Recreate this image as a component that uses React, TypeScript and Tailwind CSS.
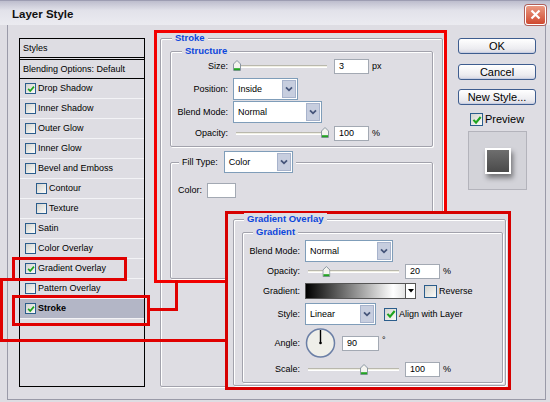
import React from 'react';

function Check({ on, big }: { on?: boolean; big?: boolean }) {
  return (
    <span
      className={
        (big ? 'w-[13px] h-[13px]' : 'w-[11px] h-[11px]') +
        ' shrink-0 flex items-center justify-center border border-[#2b5d8c] bg-[linear-gradient(135deg,#d3d3cf,#fbfbf8)]'
      }
    >
      {on && (
        <svg viewBox="0 0 9 9" className={big ? 'w-[10px] h-[10px]' : 'w-[8px] h-[8px]'}>
          <path d="M1.3 4.4 L3.6 6.8 L7.8 1.8" fill="none" stroke="#1ea41e" strokeWidth="1.9" />
        </svg>
      )}
    </span>
  );
}

function Thumb() {
  return (
    <svg width="8" height="11" viewBox="0 0 8 11">
      <path d="M0.5 4 L4 0.5 L7.5 4 V10.5 H0.5 Z" fill="#f4f4ef" stroke="#8a96a2" />
      <rect x="1" y="8.2" width="6" height="2" fill="#22a322" />
    </svg>
  );
}

function Slider({ className, trackClass, value }: { className: string; trackClass: string; value: number }) {
  // value 0..1 places the thumb along the track
  return (
    <div className={'relative h-[12px] flex items-center ' + className}>
      <div className={'ml-[3px] h-[3px] bg-[#f1f0e4] border-t border-[#b9b8ad] border-b border-b-[#ffffff] ' + trackClass} />
      <div className="absolute top-0" style={{ left: `${value * 100}%`, transform: `translateX(-${value * 100}%)` }}>
        <Thumb />
      </div>
    </div>
  );
}

function Select({ text, className }: { text: string; className: string }) {
  return (
    <div className={'flex h-[22px] border border-[#7f9db9] bg-white shrink-0 ' + className}>
      <span className="flex-1 flex items-center pl-[4px] pt-[1px]">{text}</span>
      <span className="w-[14px] my-[1px] mr-[1px] flex items-center justify-center bg-[#c7cedf] border border-[#a7b3cc]">
        <svg width="8" height="6" viewBox="0 0 8 6">
          <path d="M1 1.3 L4 4.3 L7 1.3" fill="none" stroke="#45557a" strokeWidth="1.8" />
        </svg>
      </span>
    </div>
  );
}

function Field({ value, className }: { value: string; className: string }) {
  return (
    <div className={'h-[15px] bg-white border border-[#a3a9b3] flex items-center pl-[4px] shrink-0 ' + className}>
      {value}
    </div>
  );
}

type Item = { label: string; on?: boolean; indent?: boolean; selected?: boolean };

const items: Item[] = [
  { label: 'Drop Shadow', on: true },
  { label: 'Inner Shadow' },
  { label: 'Outer Glow' },
  { label: 'Inner Glow' },
  { label: 'Bevel and Emboss' },
  { label: 'Contour', indent: true },
  { label: 'Texture', indent: true },
  { label: 'Satin' },
  { label: 'Color Overlay' },
  { label: 'Gradient Overlay', on: true },
  { label: 'Pattern Overlay' },
  { label: 'Stroke', on: true, selected: true },
];

function StyleList() {
  return (
    <div className="w-[126px] h-[349px] border border-black flex flex-col shrink-0">
      <div className="h-[19px] flex items-center pl-[3px] border-b border-black">Styles</div>
      <div className="h-[1px]" />
      <div className="h-[20px] flex items-center pl-[3px] border-t border-b border-black">Blending Options: Default</div>
      {items.map((it) => (
        <div
          key={it.label}
          className={
            'h-[20px] flex items-center border-b border-[#f3f3f6] ' +
            (it.indent ? 'pl-[16px] ' : 'pl-[5px] ') +
            (it.selected ? 'bg-[#b3b6c6] font-bold' : '')
          }
        >
          <Check on={it.on} />
          <span className="ml-[2px]">{it.label}</span>
        </div>
      ))}
    </div>
  );
}

function Button({ children }: { children: React.ReactNode }) {
  return (
    <div className="h-[16px] rounded-[3px] border border-[#3e5d8f] bg-[linear-gradient(to_bottom,#ffffff,#ececf0_70%,#d8d8e2)] flex items-center justify-center text-[11px] leading-none shadow-[inset_0_-1px_0_#c9cfe2]">
      {children}
    </div>
  );
}

export default function App() {
  return (
    <div className="relative w-[550px] h-[402px] overflow-hidden bg-[#dedde3] text-black text-[9px] leading-none font-['Liberation_Sans',Arial,sans-serif]">
      {/* title bar */}
      <div className="h-[25px] flex items-center justify-between pt-[3px] pl-[12px] pr-[4px] border-t border-[#9d9db2] bg-[linear-gradient(to_bottom,#bdbdcd,#e2e2ea_40%,#ebebf0)]">
        <span className="text-[11.5px] font-bold text-[#111]">Layer Style</span>
        <div className="w-[21px] h-[20px] rounded-[3px] border border-white bg-[linear-gradient(to_bottom,#ea9a82,#cf4a30)] flex items-center justify-center shadow-[0_0_0_1px_#b0605a]">
          <svg width="11" height="11" viewBox="0 0 11 11">
            <path d="M1.5 1.5 L9.5 9.5 M9.5 1.5 L1.5 9.5" stroke="#fff" strokeWidth="2.2" />
          </svg>
        </div>
      </div>

      {/* dialog body */}
      <div className="h-[375px] ml-[7px] mr-[4px] border-l border-r border-b border-[#9a9aa8]">
        <div className="flex items-start pt-[13px] pl-[11px]">
          <StyleList />

          {/* Stroke group */}
          <div className="ml-[15px] w-[283px] h-[349px] border border-[#a2a2ac] rounded-[2px] shadow-[1px_1px_0_#fff,inset_1px_1px_0_#fff] flex flex-col shrink-0">
            <div className="-mt-[7px] ml-[11px] px-[3px] w-fit bg-[#dedde3] font-bold text-[9.5px] leading-[12px] text-[#0c47dc]">Stroke</div>

            {/* Structure */}
            <div className="mx-[9px] mt-[7px] border border-[#a2a2ac] rounded-[2px] shadow-[1px_1px_0_#fff,inset_1px_1px_0_#fff] flex flex-col pb-[5px]">
              <div className="-mt-[7px] ml-[11px] px-[3px] w-fit bg-[#dedde3] font-bold text-[9.5px] leading-[12px] text-[#0c47dc]">Structure</div>

              <div className="mt-[1px] h-[16px] flex items-center">
                <span className="w-[57px] text-right">Size:</span>
                <Slider className="ml-[5px] w-[94px]" trackClass="w-[91px]" value={0} />
                <Field value="3" className="ml-[7px] w-[35px]" />
                <span className="ml-[3px]">px</span>
              </div>
              <div className="mt-[4px] h-[22px] flex items-center">
                <span className="w-[57px] text-right">Position:</span>
                <Select text="Inside" className="ml-[5px] w-[65px]" />
              </div>
              <div className="mt-[1px] h-[22px] flex items-center">
                <span className="w-[57px] text-right">Blend Mode:</span>
                <Select text="Normal" className="ml-[5px] w-[89px]" />
              </div>
              <div className="mt-[2px] h-[16px] flex items-center">
                <span className="w-[57px] text-right">Opacity:</span>
                <Slider className="ml-[5px] w-[96px]" trackClass="w-[91px]" value={1} />
                <Field value="100" className="ml-[5px] w-[35px]" />
                <span className="ml-[3px]">%</span>
              </div>
            </div>

            {/* Fill */}
            <div className="mx-[9px] mt-[15px] h-[117px] border border-[#a2a2ac] rounded-[2px] shadow-[1px_1px_0_#fff,inset_1px_1px_0_#fff] flex flex-col">
              <div className="-mt-[12px] ml-[8px] px-[3px] w-fit bg-[#dedde3] flex items-center h-[22px]">
                <span>Fill Type:</span>
                <Select text="Color" className="ml-[6px] w-[69px]" />
              </div>
              <div className="mt-[10px] pl-[7px] h-[15px] flex items-center">
                <span>Color:</span>
                <div className="ml-[5px] w-[29px] h-[15px] bg-white border border-[#a3a9b3]" />
              </div>
            </div>
          </div>

          {/* buttons */}
          <div className="ml-[15px] w-[78px] flex flex-col shrink-0">
            <Button>OK</Button>
            <div className="h-[10px]" />
            <Button>Cancel</Button>
            <div className="h-[9px]" />
            <Button>New Style...</Button>
            <div className="mt-[8px] pl-[12px] h-[13px] flex items-center">
              <Check on big />
              <span className="ml-[2px] text-[11px]">Preview</span>
            </div>
            <div className="mt-[5px] ml-[10px] w-[59px] h-[59px] bg-[#d3d3d9] border border-[#b3b3bb] flex items-center justify-center">
              <div className="w-[26px] h-[26px] border-2 border-white bg-[linear-gradient(to_bottom,#6e6e6e,#4a4a4a)] shadow-[2px_4px_5px_rgba(0,0,0,0.45)]" />
            </div>
          </div>
        </div>
      </div>

      {/* callout outlines */}
      <div className="absolute left-[154px] top-[30px] w-[293px] h-[253px] border-[3px] border-[#f20000] z-10 pointer-events-none" />
      <div className="absolute left-[12px] top-[257px] w-[115px] h-[24px] border-[3px] border-[#e00000] z-10 pointer-events-none" />
      <div className="absolute left-0 top-[278px] w-[13px] h-[3px] bg-[#e00000] z-10" />
      <div className="absolute left-0 top-[278px] w-[3px] h-[64px] bg-[#e00000] z-10" />
      <div className="absolute left-0 top-[339px] w-[227px] h-[3px] bg-[#e00000] z-10" />
      <div className="absolute left-[12px] top-[295px] w-[138px] h-[31px] border-[3px] border-[#e00000] z-10 pointer-events-none" />
      <div className="absolute left-[149px] top-[308px] w-[29px] h-[3px] bg-[#e00000] z-10" />
      <div className="absolute left-[175px] top-[280px] w-[3px] h-[31px] bg-[#e00000] z-10" />

      {/* Gradient Overlay panel laid over the dialog */}
      <div className="absolute left-[225px] top-[211px] w-[286px] h-[179px] border-[3px] border-[#d60000] bg-[#dedde3] z-20">
        <div className="ml-[5px] mt-[5px] w-[273px] h-[167px] border border-[#a2a2ac] rounded-[2px] shadow-[1px_1px_0_#fff,inset_1px_1px_0_#fff] flex flex-col">
          <div className="-mt-[7px] ml-[10px] px-[3px] w-fit bg-[#dedde3] font-bold text-[9.5px] leading-[12px] text-[#0c47dc]">Gradient Overlay</div>
          <div className="ml-[8px] mt-[7px] w-[261px] h-[151px] border border-[#a2a2ac] rounded-[2px] shadow-[1px_1px_0_#fff,inset_1px_1px_0_#fff] flex flex-col">
            <div className="-mt-[7px] ml-[10px] px-[3px] w-fit bg-[#dedde3] font-bold text-[9.5px] leading-[12px] text-[#0c47dc]">Gradient</div>

            <div className="mt-[2px] h-[22px] flex items-center">
              <span className="w-[57px] text-right">Blend Mode:</span>
              <Select text="Normal" className="ml-[5px] w-[88px]" />
            </div>
            <div className="mt-[2px] h-[15px] flex items-center">
              <span className="w-[57px] text-right">Opacity:</span>
              <Slider className="ml-[5px] w-[96px]" trackClass="w-[91px]" value={0.2} />
              <Field value="20" className="ml-[4px] w-[35px]" />
              <span className="ml-[3px]">%</span>
            </div>
            <div className="mt-[4px] h-[16px] flex items-center">
              <span className="w-[57px] text-right">Gradient:</span>
              <div className="ml-[5px] w-[101px] h-[16px] border border-[#555] bg-[linear-gradient(to_right,#000,#fff_88%,#e4e4e4)]" />
              <div className="w-[10px] h-[16px] bg-white border border-l-0 border-[#555] flex items-center justify-center">
                <svg width="6" height="4" viewBox="0 0 6 4"><path d="M0 0 H6 L3 3.5 Z" fill="#000" /></svg>
              </div>
              <span className="ml-[8px]"><Check big /></span>
              <span className="ml-[2px]">Reverse</span>
            </div>
            <div className="mt-[4px] h-[22px] flex items-center">
              <span className="w-[57px] text-right">Style:</span>
              <Select text="Linear" className="ml-[5px] w-[71px]" />
              <span className="ml-[8px]"><Check on big /></span>
              <span className="ml-[2px]">Align with Layer</span>
            </div>
            <div className="mt-[3px] h-[30px] flex items-center">
              <span className="w-[57px] text-right">Angle:</span>
              <svg className="ml-[5px] shrink-0" width="31" height="30" viewBox="0 0 31 30">
                <circle cx="15.5" cy="15" r="14" fill="#efefe9" stroke="#6b7fa6" strokeWidth="1.5" />
                <line x1="15.5" y1="15" x2="15.5" y2="2" stroke="#000" strokeWidth="1.4" />
                <circle cx="15.5" cy="15" r="1.3" fill="#000" />
              </svg>
              <Field value="90" className="ml-[6px] w-[37px]" />
              <span className="ml-[3px] self-start mt-[8px]">°</span>
            </div>
            <div className="mt-[4px] h-[15px] flex items-center">
              <span className="w-[57px] text-right">Scale:</span>
              <Slider className="ml-[5px] w-[96px]" trackClass="w-[91px]" value={0.62} />
              <Field value="100" className="ml-[4px] w-[35px]" />
              <span className="ml-[3px]">%</span>
            </div>
          </div>
        </div>
      </div>
    </div>
  );
}
